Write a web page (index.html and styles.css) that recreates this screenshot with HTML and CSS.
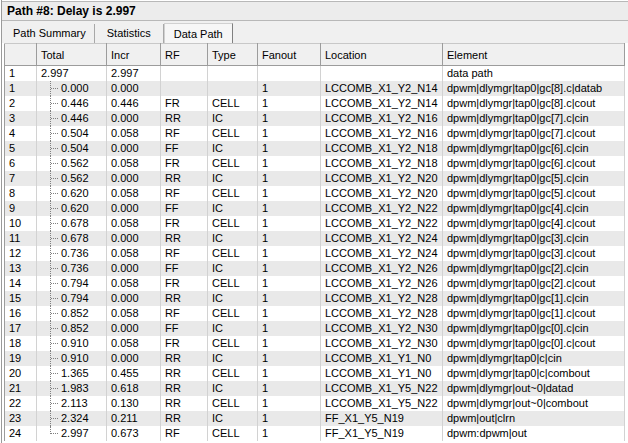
FILE: index.html
```html
<!DOCTYPE html>
<html lang="en">
<head>
    <meta charset="UTF-8">
    <title>Path #8: Delay is 2.997</title>
    <link rel="stylesheet" href="styles.css">
</head>
<body>
    <div class="panel">
        <div class="title">Path #8: Delay is 2.997</div>
        <div class="tabs">
            <span class="tab">Path Summary</span>
            <span class="tab">Statistics</span>
            <span class="tab active">Data Path</span>
        </div>
        <table class="grid">
            <colgroup>
                <col class="c-num"><col class="c-total"><col class="c-incr"><col class="c-rf">
                <col class="c-type"><col class="c-fan"><col class="c-loc"><col class="c-elem">
            </colgroup>
            <thead>
                <tr>
                    <th></th>
                    <th>Total</th>
                    <th>Incr</th>
                    <th>RF</th>
                    <th>Type</th>
                    <th>Fanout</th>
                    <th>Location</th>
                    <th>Element</th>
                </tr>
            </thead>
            <tbody>
                <tr><td>1</td><td>2.997</td><td>2.997</td><td></td><td></td><td></td><td></td><td>data path</td></tr>
                <tr class="alt"><td>1</td><td class="node">0.000</td><td>0.000</td><td></td><td></td><td>1</td><td>LCCOMB_X1_Y2_N14</td><td>dpwm|dlymgr|tap0|gc[8].c|datab</td></tr>
                <tr><td>2</td><td class="node">0.446</td><td>0.446</td><td>FR</td><td>CELL</td><td>1</td><td>LCCOMB_X1_Y2_N14</td><td>dpwm|dlymgr|tap0|gc[8].c|cout</td></tr>
                <tr class="alt"><td>3</td><td class="node">0.446</td><td>0.000</td><td>RR</td><td>IC</td><td>1</td><td>LCCOMB_X1_Y2_N16</td><td>dpwm|dlymgr|tap0|gc[7].c|cin</td></tr>
                <tr><td>4</td><td class="node">0.504</td><td>0.058</td><td>RF</td><td>CELL</td><td>1</td><td>LCCOMB_X1_Y2_N16</td><td>dpwm|dlymgr|tap0|gc[7].c|cout</td></tr>
                <tr class="alt"><td>5</td><td class="node">0.504</td><td>0.000</td><td>FF</td><td>IC</td><td>1</td><td>LCCOMB_X1_Y2_N18</td><td>dpwm|dlymgr|tap0|gc[6].c|cin</td></tr>
                <tr><td>6</td><td class="node">0.562</td><td>0.058</td><td>FR</td><td>CELL</td><td>1</td><td>LCCOMB_X1_Y2_N18</td><td>dpwm|dlymgr|tap0|gc[6].c|cout</td></tr>
                <tr class="alt"><td>7</td><td class="node">0.562</td><td>0.000</td><td>RR</td><td>IC</td><td>1</td><td>LCCOMB_X1_Y2_N20</td><td>dpwm|dlymgr|tap0|gc[5].c|cin</td></tr>
                <tr><td>8</td><td class="node">0.620</td><td>0.058</td><td>RF</td><td>CELL</td><td>1</td><td>LCCOMB_X1_Y2_N20</td><td>dpwm|dlymgr|tap0|gc[5].c|cout</td></tr>
                <tr class="alt"><td>9</td><td class="node">0.620</td><td>0.000</td><td>FF</td><td>IC</td><td>1</td><td>LCCOMB_X1_Y2_N22</td><td>dpwm|dlymgr|tap0|gc[4].c|cin</td></tr>
                <tr><td>10</td><td class="node">0.678</td><td>0.058</td><td>FR</td><td>CELL</td><td>1</td><td>LCCOMB_X1_Y2_N22</td><td>dpwm|dlymgr|tap0|gc[4].c|cout</td></tr>
                <tr class="alt"><td>11</td><td class="node">0.678</td><td>0.000</td><td>RR</td><td>IC</td><td>1</td><td>LCCOMB_X1_Y2_N24</td><td>dpwm|dlymgr|tap0|gc[3].c|cin</td></tr>
                <tr><td>12</td><td class="node">0.736</td><td>0.058</td><td>RF</td><td>CELL</td><td>1</td><td>LCCOMB_X1_Y2_N24</td><td>dpwm|dlymgr|tap0|gc[3].c|cout</td></tr>
                <tr class="alt"><td>13</td><td class="node">0.736</td><td>0.000</td><td>FF</td><td>IC</td><td>1</td><td>LCCOMB_X1_Y2_N26</td><td>dpwm|dlymgr|tap0|gc[2].c|cin</td></tr>
                <tr><td>14</td><td class="node">0.794</td><td>0.058</td><td>FR</td><td>CELL</td><td>1</td><td>LCCOMB_X1_Y2_N26</td><td>dpwm|dlymgr|tap0|gc[2].c|cout</td></tr>
                <tr class="alt"><td>15</td><td class="node">0.794</td><td>0.000</td><td>RR</td><td>IC</td><td>1</td><td>LCCOMB_X1_Y2_N28</td><td>dpwm|dlymgr|tap0|gc[1].c|cin</td></tr>
                <tr><td>16</td><td class="node">0.852</td><td>0.058</td><td>RF</td><td>CELL</td><td>1</td><td>LCCOMB_X1_Y2_N28</td><td>dpwm|dlymgr|tap0|gc[1].c|cout</td></tr>
                <tr class="alt"><td>17</td><td class="node">0.852</td><td>0.000</td><td>FF</td><td>IC</td><td>1</td><td>LCCOMB_X1_Y2_N30</td><td>dpwm|dlymgr|tap0|gc[0].c|cin</td></tr>
                <tr><td>18</td><td class="node">0.910</td><td>0.058</td><td>FR</td><td>CELL</td><td>1</td><td>LCCOMB_X1_Y2_N30</td><td>dpwm|dlymgr|tap0|gc[0].c|cout</td></tr>
                <tr class="alt"><td>19</td><td class="node">0.910</td><td>0.000</td><td>RR</td><td>IC</td><td>1</td><td>LCCOMB_X1_Y1_N0</td><td>dpwm|dlymgr|tap0|c|cin</td></tr>
                <tr><td>20</td><td class="node">1.365</td><td>0.455</td><td>RR</td><td>CELL</td><td>1</td><td>LCCOMB_X1_Y1_N0</td><td>dpwm|dlymgr|tap0|c|combout</td></tr>
                <tr class="alt"><td>21</td><td class="node">1.983</td><td>0.618</td><td>RR</td><td>IC</td><td>1</td><td>LCCOMB_X1_Y5_N22</td><td>dpwm|dlymgr|out~0|datad</td></tr>
                <tr><td>22</td><td class="node">2.113</td><td>0.130</td><td>RR</td><td>CELL</td><td>1</td><td>LCCOMB_X1_Y5_N22</td><td>dpwm|dlymgr|out~0|combout</td></tr>
                <tr class="alt"><td>23</td><td class="node">2.324</td><td>0.211</td><td>RR</td><td>IC</td><td>1</td><td>FF_X1_Y5_N19</td><td>dpwm|out|clrn</td></tr>
                <tr><td>24</td><td class="node last">2.997</td><td>0.673</td><td>RF</td><td>CELL</td><td>1</td><td>FF_X1_Y5_N19</td><td>dpwm:dpwm|out</td></tr>
            </tbody>
        </table>
    </div>
</body>
</html>
```

FILE: styles.css
```css
body {
    margin: 0;
    font-family: "Liberation Sans", Arial, sans-serif;
    font-size: 11px;
    color: #000;
    background: #fff;
}
.panel {
    height: 443px;
    margin-left: 1px;
    border-left: 1px solid #9a9a9a;
    overflow: hidden;
}
.title {
    height: 18px;
    line-height: 18px;
    padding-left: 5px;
    margin-top: 1px;
    border-top: 1px solid #b8b8b8;
    border-bottom: 1px solid #b8b8b8;
    background: #ececec;
    font-size: 12px;
    font-weight: bold;
}
.tabs {
    display: flex;
    align-items: flex-end;
    height: 22px;
    padding-left: 3px;
    background: #f0f0f0;
}
.tab {
    min-width: 69px;
    height: 19px;
    line-height: 19px;
    padding: 0 8px;
    box-sizing: border-box;
    text-align: center;
    border-right: 1px solid #a8a8a8;
}
.tab.active {
    height: 20px;
    line-height: 21px;
    background: #f6f6f6;
    border-top: 1px solid #d0d0d0;
    border-left: 1px solid #d0d0d0;
    border-right: 1px solid #808080;
}
.grid {
    table-layout: fixed;
    border-collapse: collapse;
    width: 620px;
    margin-left: 2px;
}
.c-num { width: 32px; }
.c-total { width: 70px; }
.c-incr { width: 54px; }
.c-rf { width: 47px; }
.c-type { width: 50px; }
.c-fan { width: 63px; }
.c-loc { width: 122px; }
.c-elem { width: 182px; }
th {
    height: 21px;
    padding: 0 4px;
    text-align: left;
    font-weight: normal;
    background: #f0f0f0;
    border-top: 1px solid #c8c8c8;
    border-right: 1px solid #9c9c9c;
    border-bottom: 1px solid #9c9c9c;
}
th:first-child {
    border-left: 1px solid #9c9c9c;
}
td {
    height: 15px;
    padding: 0 4px;
    line-height: 15px;
    white-space: nowrap;
    overflow: hidden;
    border-right: 1px solid #d2d2d2;
}
td:first-child {
    border-left: 1px solid #9c9c9c;
}
tr.alt td {
    background: #e9e9e9;
}
.node {
    position: relative;
    padding-left: 24px;
}
.node::before {
    content: "";
    position: absolute;
    left: 13px;
    top: 0;
    bottom: 0;
    border-left: 1px dotted #808080;
}
.node.last::before {
    bottom: 7px;
}
.node::after {
    content: "";
    position: absolute;
    left: 14px;
    top: 7px;
    width: 7px;
    border-top: 1px dotted #808080;
}
```
